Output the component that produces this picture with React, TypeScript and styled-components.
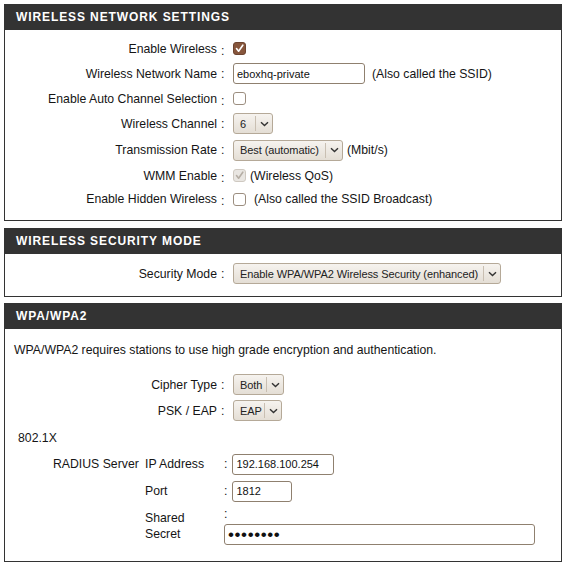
import React from "react";
import styled, { createGlobalStyle } from "styled-components";

const Global = createGlobalStyle`
  html, body { margin: 0; padding: 0; background: #fff; }
  body { font-family: "Liberation Sans", Arial, sans-serif; font-size: 12.25px; color: #151515; }
`;

const Page = styled.div`
  padding: 4px 0 0 4px;
  width: 558px;
  display: flex;
  flex-direction: column;
`;

const Panel = styled.section<{ gap?: number }>`
  margin-bottom: ${(p) => p.gap ?? 0}px;
`;

const Header = styled.div`
  height: 26px;
  background: #333333;
  color: #fff;
  font-weight: bold;
  font-size: 12px;
  letter-spacing: 0.9px;
  padding-left: 12px;
  display: flex;
  align-items: center;
`;

const Body = styled.div<{ pt: number; pb: number }>`
  border: 1px solid #333333;
  border-top: none;
  padding-top: ${(p) => p.pt}px;
  padding-bottom: ${(p) => p.pb}px;
`;

const Row = styled.div<{ h?: number; mt?: number }>`
  display: grid;
  grid-template-columns: 212px 16px 1fr;
  align-items: center;
  height: ${(p) => p.h ?? 25}px;
  margin-top: ${(p) => p.mt ?? 0}px;
`;

const Label = styled.div`
  text-align: right;
  white-space: nowrap;
`;

const Colon = styled.div<{ low?: boolean }>`
  padding-left: 4px;
  padding-top: ${(p) => (p.low ? 4 : 0)}px;
`;

const Cell = styled.div<{ gap?: number }>`
  display: flex;
  align-items: center;
  gap: ${(p) => p.gap ?? 0}px;
  white-space: nowrap;
`;

const Box = styled.span<{ checked?: boolean; disabled?: boolean }>`
  box-sizing: border-box;
  width: 13px;
  height: 13px;
  border-radius: 3px;
  display: inline-flex;
  align-items: center;
  justify-content: center;
  border: 1px solid
    ${(p) => (p.disabled ? "#cfc9c1" : p.checked ? "#6d4430" : "#9c8e80")};
  background: ${(p) =>
    p.disabled ? "#e9e6e2" : p.checked ? "#87563c" : "#ffffff"};
`;

const Check = ({ checked, disabled }: { checked?: boolean; disabled?: boolean }) => (
  <Box checked={checked} disabled={disabled}>
    {checked && (
      <svg width="9" height="9" viewBox="0 0 9 9">
        <path
          d="M1.5 4.6 L3.6 7.2 L7.8 1.2"
          fill="none"
          stroke={disabled ? "#b5aea5" : "#ffffff"}
          strokeWidth="1.6"
          strokeLinecap="round"
          strokeLinejoin="round"
        />
      </svg>
    )}
  </Box>
);

const SelectBox = styled.div<{ w: number }>`
  box-sizing: border-box;
  width: ${(p) => p.w}px;
  height: 21px;
  display: inline-flex;
  align-items: center;
  border: 1px solid #b5a998;
  border-radius: 3px;
  background: linear-gradient(#f6f3ef, #e4ded5);
  font-size: 11px;
  letter-spacing: -0.08px;
  color: #222;
`;

const SelectText = styled.span`
  flex: 1;
  padding-left: 6px;
  white-space: nowrap;
  overflow: hidden;
`;

const SelectSep = styled.span`
  width: 1px;
  height: 15px;
  background: #c9bfb2;
`;

const SelectArrow = styled.span`
  width: 16px;
  display: flex;
  align-items: center;
  justify-content: center;
`;

const Select = ({ w, value }: { w: number; value: string }) => (
  <SelectBox w={w}>
    <SelectText>{value}</SelectText>
    <SelectSep />
    <SelectArrow>
      <svg width="9" height="6" viewBox="0 0 9 6">
        <path d="M1 1.2 L4.5 4.6 L8 1.2" fill="none" stroke="#333" strokeWidth="1.4" />
      </svg>
    </SelectArrow>
  </SelectBox>
);

const TextInput = styled.input<{ w: number; secret?: boolean }>`
  box-sizing: border-box;
  width: ${(p) => p.w}px;
  height: 21px;
  border: 1px solid #8f806f;
  border-radius: 3px;
  padding: 0 3px;
  margin: 0;
  font-family: "Liberation Sans", Arial, sans-serif;
  font-size: ${(p) => (p.secret ? 17 : 11)}px;
  letter-spacing: ${(p) => (p.secret ? 0.6 : 0)}px;
  color: #111;
  background: #fff;
  outline: none;
`;

const Note = styled.span``;

const Intro = styled.p`
  margin: 0;
  padding-left: 9px;
  line-height: 16px;
`;

const SubTitle = styled.div`
  padding-left: 13px;
  line-height: 16px;
  margin-top: 6px;
`;

const Radius = styled.div`
  display: grid;
  grid-template-columns: 92px 79px 1fr;
  padding-left: 48px;
  margin-top: 6px;
  row-gap: 3px;
  align-items: center;
`;

const RLabel = styled.div`
  line-height: 16px;
  white-space: nowrap;
`;

const RValue = styled.div<{ stack?: boolean }>`
  display: flex;
  flex-direction: ${(p) => (p.stack ? "column" : "row")};
  align-items: ${(p) => (p.stack ? "flex-start" : "center")};
  gap: ${(p) => (p.stack ? 3 : 5)}px;
  padding-top: ${(p) => (p.stack ? 1 : 0)}px;
  height: ${(p) => (p.stack ? "auto" : "24px")};
`;

const RColon = styled.span`
  line-height: 14px;
`;

export default function App() {
  return (
    <>
      <Global />
      <Page>
        <Panel gap={7}>
          <Header>WIRELESS NETWORK SETTINGS</Header>
          <Body pt={6} pb={9}>
            <Row>
              <Label>Enable Wireless</Label>
              <Colon low>:</Colon>
              <Cell>
                <Check checked />
              </Cell>
            </Row>
            <Row>
              <Label>Wireless Network Name</Label>
              <Colon>:</Colon>
              <Cell gap={7}>
                <TextInput w={132} defaultValue="eboxhq-private" readOnly />
                <Note>(Also called the SSID)</Note>
              </Cell>
            </Row>
            <Row>
              <Label>Enable Auto Channel Selection</Label>
              <Colon low>:</Colon>
              <Cell>
                <Check />
              </Cell>
            </Row>
            <Row>
              <Label>Wireless Channel</Label>
              <Colon>:</Colon>
              <Cell>
                <Select w={40} value="6" />
              </Cell>
            </Row>
            <Row h={28}>
              <Label>Transmission Rate</Label>
              <Colon>:</Colon>
              <Cell gap={4}>
                <Select w={110} value="Best (automatic)" />
                <Note>(Mbit/s)</Note>
              </Cell>
            </Row>
            <Row h={23}>
              <Label>WMM Enable</Label>
              <Colon low>:</Colon>
              <Cell gap={4}>
                <Check checked disabled />
                <Note>(Wireless QoS)</Note>
              </Cell>
            </Row>
            <Row h={24}>
              <Label>Enable Hidden Wireless</Label>
              <Colon low>:</Colon>
              <Cell gap={8}>
                <Check />
                <Note>(Also called the SSID Broadcast)</Note>
              </Cell>
            </Row>
          </Body>
        </Panel>

        <Panel gap={6}>
          <Header>WIRELESS SECURITY MODE</Header>
          <Body pt={7} pb={10}>
            <Row>
              <Label>Security Mode</Label>
              <Colon>:</Colon>
              <Cell>
                <Select w={268} value="Enable WPA/WPA2 Wireless Security (enhanced)" />
              </Cell>
            </Row>
          </Body>
        </Panel>

        <Panel>
          <Header>WPA/WPA2</Header>
          <Body pt={13} pb={16}>
            <Intro>WPA/WPA2 requires stations to use high grade encryption and authentication.</Intro>
            <Row mt={14}>
              <Label>Cipher Type</Label>
              <Colon>:</Colon>
              <Cell>
                <Select w={51} value="Both" />
              </Cell>
            </Row>
            <Row h={27}>
              <Label>PSK / EAP</Label>
              <Colon>:</Colon>
              <Cell>
                <Select w={49} value="EAP" />
              </Cell>
            </Row>
            <SubTitle>802.1X</SubTitle>
            <Radius>
              <RLabel>RADIUS Server</RLabel>
              <RLabel>IP Address</RLabel>
              <RValue>
                <RColon>:</RColon>
                <TextInput w={102} defaultValue="192.168.100.254" readOnly />
              </RValue>
              <RLabel />
              <RLabel>Port</RLabel>
              <RValue>
                <RColon>:</RColon>
                <TextInput w={60} defaultValue="1812" readOnly />
              </RValue>
              <RLabel />
              <RLabel>
                Shared
                <br />
                Secret
              </RLabel>
              <RValue stack>
                <RColon>:</RColon>
                <TextInput w={311} secret type="password" defaultValue="********" readOnly />
              </RValue>
            </Radius>
          </Body>
        </Panel>
      </Page>
    </>
  );
}
